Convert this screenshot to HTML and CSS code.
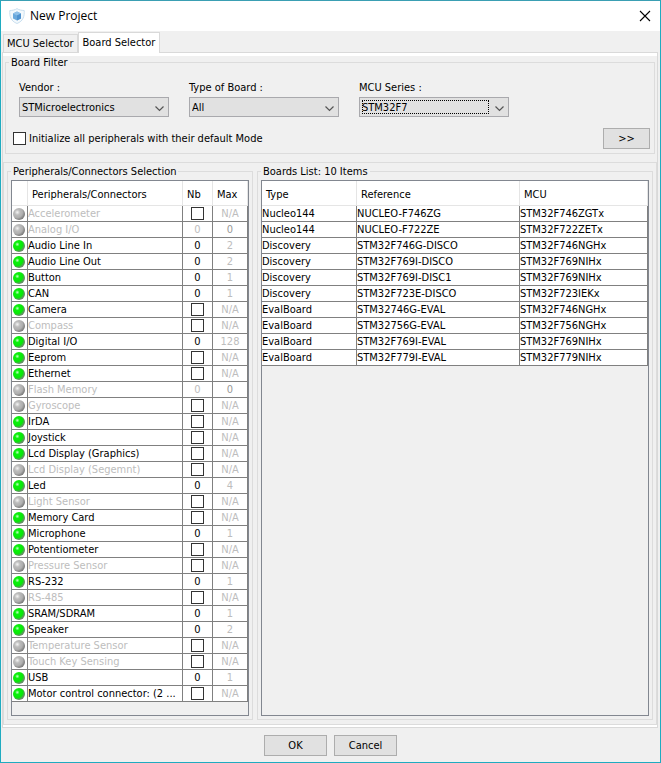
FILE: index.html
```html
<!DOCTYPE html>
<html lang="en">
<head>
  <meta charset="UTF-8">
  <title>New Project</title>
  <link rel="stylesheet" href="styles.css">
</head>
<body>
  <div class="window">

    <header class="titlebar">
      <svg class="app-icon" width="16" height="16" viewBox="0 0 16 16">
        <path d="M8 .6 C10 2 12.500 2.400 15.200 2.500 C15.500 8 14.500 13 8 15.500 C1.500 13 .5 8 .8 2.500 C3.500 2.400 6 2 8 .6z" fill="#f4f9fc" stroke="#c9dfef"/>
        <path d="M8 3.500l4 2v5l-4 2-4-2v-5z" fill="#6aa9dc"/>
        <path d="M8 3.500l4 2-4 2-4-2z" fill="#8fc0e8"/>
        <path d="M8 7.500l4-2v5l-4 2z" fill="#4f92cf"/>
      </svg>
      <h1>New Project</h1>
      <button class="close" aria-label="Close">
        <svg width="12" height="12" viewBox="0 0 12 12"><path d="M1 1l10 10M11 1L1 11" stroke="#000" stroke-width="1.100"/></svg>
      </button>
    </header>

    <div class="tabs" role="tablist">
      <button class="tab" role="tab">MCU Selector</button>
      <button class="tab active" role="tab" aria-selected="true">Board Selector</button>
    </div>

    <main class="pane">
      <fieldset class="group filter">
        <legend>Board Filter</legend>
        <div class="combos">
          <div class="combo">
            <label for="vendor">Vendor :</label>
            <div class="select">
              <select id="vendor"><option>STMicroelectronics</option></select>
              <svg class="arrow" width="9" height="6" viewBox="0 0 9 6"><path d="M.5 .5l4 4 4-4" fill="none" stroke="#555" stroke-width="1.200"/></svg>
            </div>
          </div>
          <div class="combo">
            <label for="type">Type of Board :</label>
            <div class="select">
              <select id="type"><option>All</option></select>
              <svg class="arrow" width="9" height="6" viewBox="0 0 9 6"><path d="M.5 .5l4 4 4-4" fill="none" stroke="#555" stroke-width="1.200"/></svg>
            </div>
          </div>
          <div class="combo">
            <label for="series">MCU Series :</label>
            <div class="select focused">
              <select id="series"><option>STM32F7</option></select>
              <svg class="arrow" width="9" height="6" viewBox="0 0 9 6"><path d="M.5 .5l4 4 4-4" fill="none" stroke="#555" stroke-width="1.200"/></svg>
            </div>
          </div>
        </div>
        <div class="options">
          <input type="checkbox" id="init">
          <label for="init">Initialize all peripherals with their default Mode</label>
          <button class="btn more">&gt;&gt;</button>
        </div>
      </fieldset>

      <div class="lists">
        <fieldset class="group peripherals">
          <legend>Peripherals/Connectors Selection</legend>
          <div class="scroll">
            <table>
              <colgroup><col class="c-led"><col><col class="c-nb"><col class="c-max"></colgroup>
              <thead>
                <tr><th></th><th>Peripherals/Connectors</th><th>Nb</th><th>Max</th></tr>
              </thead>
              <tbody id="peripherals"></tbody>
            </table>
          </div>
        </fieldset>

        <fieldset class="group boards">
          <legend>Boards List: 10 Items</legend>
          <div class="scroll">
            <table>
              <colgroup><col class="c-type"><col class="c-ref"><col></colgroup>
              <thead>
                <tr><th>Type</th><th>Reference</th><th>MCU</th></tr>
              </thead>
              <tbody>
                <tr><td>Nucleo144</td><td>NUCLEO-F746ZG</td><td>STM32F746ZGTx</td></tr>
                <tr><td>Nucleo144</td><td>NUCLEO-F722ZE</td><td>STM32F722ZETx</td></tr>
                <tr><td>Discovery</td><td>STM32F746G-DISCO</td><td>STM32F746NGHx</td></tr>
                <tr><td>Discovery</td><td>STM32F769I-DISCO</td><td>STM32F769NIHx</td></tr>
                <tr><td>Discovery</td><td>STM32F769I-DISC1</td><td>STM32F769NIHx</td></tr>
                <tr><td>Discovery</td><td>STM32F723E-DISCO</td><td>STM32F723IEKx</td></tr>
                <tr><td>EvalBoard</td><td>STM32746G-EVAL</td><td>STM32F746NGHx</td></tr>
                <tr><td>EvalBoard</td><td>STM32756G-EVAL</td><td>STM32F756NGHx</td></tr>
                <tr><td>EvalBoard</td><td>STM32F769I-EVAL</td><td>STM32F769NIHx</td></tr>
                <tr><td>EvalBoard</td><td>STM32F779I-EVAL</td><td>STM32F779NIHx</td></tr>
              </tbody>
            </table>
          </div>
        </fieldset>
      </div>
    </main>

    <footer class="actions">
      <button class="btn">OK</button>
      <button class="btn">Cancel</button>
    </footer>
  </div>

  <script src="script.js"></script>
</body>
</html>
```
FILE: styles.css
```css
* {
  box-sizing: border-box;
}

body {
  margin: 0;
  font-family: Tahoma, 'DejaVu Sans Condensed', 'DejaVu Sans', sans-serif;
  font-size: 11px;
  line-height: 13px;
  color: #000;
}

button, select, input {
  font: inherit;
  color: inherit;
  margin: 0;
}

.window {
  display: flex;
  flex-direction: column;
  min-height: 100vh;
  background: #f0f0f0;
  border: 1px solid #1fabc0;
  border-top-color: #3a9fb3;
}

/* title bar */
.titlebar {
  display: flex;
  align-items: center;
  height: 30px;
  padding: 0 9px 0 8px;
  background: #fff;
}

.titlebar h1 {
  flex: 1;
  margin: 0 0 0 5px;
  font-family: 'Open Sans', sans-serif;
  font-size: 12px;
  line-height: 16px;
  font-weight: normal;
}

.close {
  display: flex;
  padding: 0;
  border: none;
  background: none;
}

/* tabs */
.tabs {
  display: flex;
  align-items: flex-end;
  padding: 1px 2px 0;
}

.tab {
  height: 18px;
  padding: 0 3px;
  border: 1px solid #d9d9d9;
  border-bottom: none;
  background: #f0f0f0;
  white-space: nowrap;
}

.tab.active {
  height: 21px;
  margin-bottom: -1px;
  padding: 0 4px 2px;
  background: #fff;
  z-index: 1;
}

.pane {
  flex: 1;
  display: flex;
  flex-direction: column;
  margin: 0 2px 0 1px;
  padding: 0 0 2px 2px;
  border: 1px solid #d9d9d9;
  box-shadow: inset 0 3px #fff, inset 0 -2px #fff;
}

.group {
  min-width: 0;
  margin: 0;
  padding: 0;
  border: 1px solid #dcdcdc;
}

.group legend {
  padding: 0 2px;
}

/* filter */
.filter {
  margin: 3px 2px 8px 0;
  padding: 12px 4px 4px 7px;
}

.filter legend {
  margin-left: -4px;
}

.combos {
  display: flex;
  gap: 20px;
  padding-left: 6px;
}

.combo {
  width: 150px;
}

.combo label {
  display: block;
  margin-bottom: 3px;
}

.select {
  position: relative;
}

.select select {
  display: block;
  appearance: none;
  width: 100%;
  height: 20px;
  padding: 0 20px 0 2px;
  border: 1px solid #a9a9ad;
  border-radius: 0;
  background: #e1e1e1;
}

.arrow {
  position: absolute;
  right: 5px;
  top: 9px;
  pointer-events: none;
}

.focused::after {
  content: '';
  position: absolute;
  inset: 3px 20px 3px 3px;
  border: 1px dotted #000;
  pointer-events: none;
}

.options {
  display: flex;
  align-items: center;
  margin-top: 11px;
}

input[type="checkbox"] {
  appearance: none;
  width: 13px;
  height: 13px;
  border: 1px solid #333;
  background: #fff;
}

input[type="checkbox"]:checked {
  background: #333;
  box-shadow: inset 0 0 0 2px #fff;
}

.options label {
  margin-left: 3px;
}

.btn {
  width: 63px;
  height: 21px;
  padding: 0;
  border: 1px solid #adadad;
  background: #e1e1e1;
}

.btn.more {
  width: 47px;
  margin-left: auto;
}

/* lists */
.lists {
  flex: 1;
  display: flex;
  gap: 4px;
  margin-left: -2px;
  padding: 2px 3px 4px;
  border: 1px solid #dcdcdc;
}

.group.peripherals,
.group.boards {
  display: flex;
  flex-direction: column;
  padding: 2px 3px 3px;
}

.peripherals {
  width: 246px;
}

.boards {
  flex: 1;
}

.scroll {
  flex: 1;
  border: 1px solid #828790;
}

table {
  width: 100%;
  table-layout: fixed;
  border-collapse: separate;
  border-spacing: 0;
}

.c-led { width: 16px; }
.c-nb { width: 30px; }
.c-max { width: 35px; }
.c-type { width: 95px; }
.c-ref { width: 163px; }

th {
  height: 25px;
  padding: 2px 0 0 4px;
  border-right: 1px solid #e5e5e5;
  border-bottom: 1px solid #e5e5e5;
  background: #fff;
  font-weight: normal;
  text-align: left;
}

td {
  height: 16px;
  padding: 0;
  border-right: 1px solid #808080;
  border-bottom: 1px solid #808080;
  background: #fff;
  white-space: nowrap;
  overflow: hidden;
}

.peripherals td:nth-child(3),
.peripherals td:nth-child(4) {
  text-align: center;
}

.peripherals td:nth-child(4),
.off td {
  color: #bdbdbd;
}

.peripherals td.zero {
  color: #999;
}

.peripherals input,
.led {
  display: block;
  margin: 0 auto;
}

.led {
  width: 12px;
  height: 12px;
  margin-left: 1px;
  border-radius: 50%;
  background: radial-gradient(circle at 36% 36%, #c8ffc8 0, #0cf00c 20%, #08e808 48%, #5a9a5a 66%, #777 85%);
}

.off .led {
  background: radial-gradient(circle at 36% 36%, #f4f4f4 0, #bcbcbc 25%, #b0b0b0 48%, #808080 70%, #707070 90%);
}

/* bottom buttons */
.actions {
  display: flex;
  justify-content: center;
  gap: 7px;
  padding: 7px 0 6px;
}
```
FILE: script.js
```js
// name, available on the board, max count (null = tick box)
const peripherals = [
  ['Accelerometer', false, null],
  ['Analog I/O', false, 0],
  ['Audio Line In', true, 2],
  ['Audio Line Out', true, 2],
  ['Button', true, 1],
  ['CAN', true, 1],
  ['Camera', true, null],
  ['Compass', false, null],
  ['Digital I/O', true, 128],
  ['Eeprom', true, null],
  ['Ethernet', true, null],
  ['Flash Memory', false, 0],
  ['Gyroscope', false, null],
  ['IrDA', true, null],
  ['Joystick', true, null],
  ['Lcd Display (Graphics)', true, null],
  ['Lcd Display (Segemnt)', false, null],
  ['Led', true, 4],
  ['Light Sensor', false, null],
  ['Memory Card', true, null],
  ['Microphone', true, 1],
  ['Potentiometer', true, null],
  ['Pressure Sensor', false, null],
  ['RS-232', true, 1],
  ['RS-485', false, null],
  ['SRAM/SDRAM', true, 1],
  ['Speaker', true, 2],
  ['Temperature Sensor', false, null],
  ['Touch Key Sensing', false, null],
  ['USB', true, 1],
  ['Motor control connector: (2 ...', true, null]
];

document.getElementById('peripherals').innerHTML = peripherals.map(([name, on, max], i) => {
  const tick = max === null;
  return `<tr class="${on ? 'on' : 'off'}">
    <td><span class="led"></span></td>
    <td>${tick ? `<label for="p${i}">${name}</label>` : name}</td>
    <td>${tick ? `<input type="checkbox" id="p${i}">` : 0}</td>
    <td class="${max === 0 ? 'zero' : ''}">${tick ? 'N/A' : max}</td>
  </tr>`;
}).join('');
```
